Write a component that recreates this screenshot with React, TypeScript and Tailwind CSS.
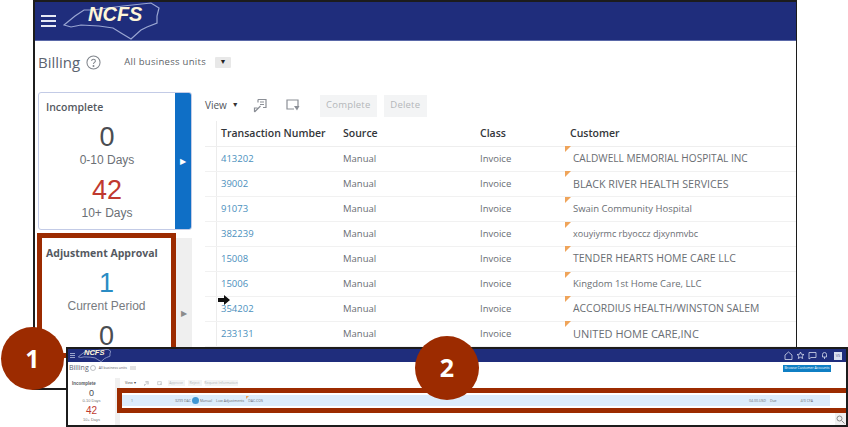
import React from "react";

const sans = "font-['Open_Sans','Liberation_Sans',sans-serif]";
const arial = "font-['Liberation_Sans',sans-serif]";

function Logo({ small }: { small?: boolean }) {
  return (
    <div className={small ? "relative w-[33px] h-[13px]" : "relative w-[97px] h-[38px]"}>
      <svg viewBox="0 0 97 38" className="absolute inset-0 w-full h-full" fill="none">
        <path
          d="M1 23 L12 14 L21 8 L30 8 L60 4 L88 1 L96 6 L94 14 L94 21 L84 25 L78 28 L68 37 L58 31 L50 26 L36 24 L18 23 L8 25 Z"
          stroke="#9aa6d2"
          strokeWidth={small ? 2.4 : 1.2}
        />
      </svg>
      <span
        className={
          small
            ? "absolute left-[6px] top-[-1px] text-[7.5px] leading-[10px] font-bold italic text-[#fff6d8] font-['Liberation_Sans',sans-serif]"
            : "absolute left-[25px] top-0 text-[20px] leading-[25px] font-bold italic text-[#fff6d8] font-['Liberation_Sans',sans-serif]"
        }
      >
        NCFS
      </span>
    </div>
  );
}

function Hamburger({ small }: { small?: boolean }) {
  return (
    <div className={small ? "flex flex-col gap-px w-[5px]" : "flex flex-col gap-[3px] w-[15px]"}>
      {[0, 1, 2].map((i) => (
        <div key={i} className={small ? "h-px bg-[#9aa4cc]" : "h-[2px] bg-[#e6e9f4]"} />
      ))}
    </div>
  );
}

const rows = [
  ["413202", "CALDWELL MEMORIAL HOSPITAL INC", "text-[10.1px]"],
  ["39002", "BLACK RIVER HEALTH SERVICES", "text-[10.7px]"],
  ["91073", "Swain Community Hospital", "text-[9.5px]"],
  ["382239", "xouyiyrmc rbyoccz djxynmvbc", "text-[9px]"],
  ["15008", "TENDER HEARTS HOME CARE LLC", "text-[10.5px]"],
  ["15006", "Kingdom 1st Home Care, LLC", "text-[9.5px]"],
  ["354202", "ACCORDIUS HEALTH/WINSTON SALEM", "text-[10.4px]"],
  ["233131", "UNITED HOME CARE,INC", "text-[11px]"],
];

function DetachIcon({ size = 15 }: { size?: number }) {
  return (
    <svg width={size} height={size} viewBox="0 0 15 15" fill="none" stroke="#8b8f96" strokeWidth="1.2">
      <path d="M5 1.5h8v8h-3M5 1.500v3M7 4h4M7 6.500h4M1.500 14v-4h3M1.500 14l6-6" />
    </svg>
  );
}

function WrapIcon({ size = 15 }: { size?: number }) {
  return (
    <svg width={size} height={size} viewBox="0 0 15 15" fill="none" stroke="#8b8f96" strokeWidth="1.2">
      <path d="M9 11H2V2h11v6" />
      <path d="M9 8h5.500L12 12.500z" fill="#8b8f96" stroke="none" />
    </svg>
  );
}

export default function App() {
  return (
    <div className={`relative w-[848px] h-[427px] overflow-hidden bg-white ${sans}`}>
      {/* Main window */}
      <div className="ml-[33px] w-[764px] h-[390px] border-2 border-[#1c1c1c] border-r-[1px] flex flex-col overflow-hidden bg-white">
        <div className="h-[39px] bg-[#1f2d7c] flex items-center pl-[6px] gap-[7px] shrink-0 border-b border-[#5a68a8]">
          <Hamburger />
          <Logo />
        </div>

        <div className="h-[51px] pb-[9px] flex items-center pl-[3px] shrink-0">
          <span className="text-[15px] text-[#5c6470]">Billing</span>
          <svg width="15" height="15" viewBox="0 0 16 16" className="ml-[6px]" fill="none" stroke="#80858c" strokeWidth="1.1">
            <circle cx="8" cy="8" r="7" />
            <path d="M6 6.400c0-2.400 4-2.400 4 0 0 1.600-2 1.500-2 3.200" />
            <circle cx="8" cy="11.800" r=".5" />
          </svg>
          <span className="ml-[23px] text-[9.5px] text-[#5d6268] tracking-[0.3px]">All business units</span>
          <span className="ml-[9px] w-[16px] h-[11px] bg-[#e8e8e8] rounded-[1px] flex items-center justify-center text-[7px] text-[#222]">▼</span>
        </div>

        <div className="flex flex-1 min-h-0">
          {/* Sidebar */}
          <div className="w-[157px] shrink-0 pl-[3px] flex flex-col gap-[3px]">
            <div className="h-[138px] shrink-0 flex rounded-[3px] border border-[#c3cbe6]">
              <div className={`flex-1 flex flex-col items-center pt-[6px] ${arial}`}>
                <div className={`self-start pl-[7px] text-[10.5px] font-semibold text-[#55595f] leading-[16px] ${sans}`}>Incomplete</div>
                <div className="text-[27px] leading-[30px] mt-[7px] text-[#4a4d52]">0</div>
                <div className="text-[12px] leading-[14px] mt-px text-[#6b6f75]">0-10 Days</div>
                <div className="text-[27px] leading-[30px] mt-[8px] text-[#c0392f]">42</div>
                <div className="text-[12px] leading-[14px] mt-px text-[#6b6f75]">10+ Days</div>
              </div>
              <div className="w-[16px] bg-[#0f6fc6] flex items-center justify-center rounded-r-[2px]">
                <span className="text-white text-[8px]">▶</span>
              </div>
            </div>
            <div className="flex flex-1 min-h-0">
              <div className={`w-[139px] -ml-[1px] h-[125px] border-[5px] border-[#9c2b00] flex flex-col items-center shrink-0 ${arial}`}>
                <div className={`self-start pl-[4px] text-[10.5px] font-bold text-[#55595f] mt-[7px] leading-[16px] whitespace-nowrap ${sans}`}>Adjustment Approval</div>
                <div className="text-[27px] leading-[28px] mt-[8px] text-[#2a8cc4]">1</div>
                <div className="text-[12px] leading-[14px] mt-[2px] text-[#777b80]">Current Period</div>
                <div className="text-[27px] leading-[30px] mt-[8px] text-[#4a4d52]">0</div>
              </div>
              <div className="w-[16px] bg-[#efefef] mt-[5px] flex items-center justify-center">
                <span className="text-[#8b8b8b] text-[8px]">▶</span>
              </div>
            </div>
          </div>

          {/* Content */}
          <div className="flex-1 min-w-0 pl-[13px]">
            <div className="h-[31px] flex items-center mt-[-2px]">
              <span className="text-[10px] text-[#50555b]">View</span>
              <span className="ml-[5px] text-[7px] text-[#333]">▼</span>
              <span className="ml-[14px]"><DetachIcon /></span>
              <span className="ml-[17px]"><WrapIcon /></span>
              <span className="ml-[20px] h-[22px] w-[57px] bg-[#f3f4f5] flex items-center justify-center text-[9.5px] text-[#b4b7ba] tracking-[0.2px]">Complete</span>
              <span className="ml-[7px] h-[22px] w-[43px] bg-[#f3f4f5] flex items-center justify-center text-[9.5px] text-[#b4b7ba] tracking-[0.2px]">Delete</span>
            </div>
            <div className="h-[26px] flex items-center border-b border-[#eeeeee] text-[10.5px] font-semibold text-[#33363a]">
              <span className="w-[12px] self-stretch border-r border-[#ececec] shrink-0" />
              <span className="pl-[4px] w-[126px] shrink-0">Transaction Number</span>
              <span className="w-[137px] shrink-0">Source</span>
              <span className="w-[90px] shrink-0">Class</span>
              <span>Customer</span>
            </div>
            {rows.map(([n, c, size]) => (
              <div key={n} className="h-[25px] flex items-center border-b border-[#f1f1f1] text-[9.5px] text-[#6a6e73]">
                <span className="w-[12px] self-stretch border-r border-[#ececec] shrink-0" />
                <span className="pl-[4px] w-[126px] shrink-0 text-[#4b8fbd]">{n}</span>
                <span className="w-[137px] shrink-0">Manual</span>
                <span className="w-[90px] shrink-0">Invoice</span>
                <span className={`relative whitespace-nowrap pl-[3px] ${size}`}>
                  <span className="absolute left-[-5px] top-[-5px] w-0 h-0 border-t-[6px] border-t-[#efa45a] border-r-[6px] border-r-transparent" />
                  {c}
                </span>
              </div>
            ))}
          </div>
        </div>
      </div>

      {/* Cursor over the table */}
      <svg width="12" height="10" viewBox="0 0 12 10" className="absolute left-[218px] top-[295px]">
        <path d="M0 3h6V0l6 5-6 5V7H0z" fill="#111" />
      </svg>

      {/* Inset window */}
      <div className="absolute left-[66px] top-[347px] w-[782px] h-[80px] border-2 border-[#1c1c1c] bg-white flex flex-col overflow-hidden">
        <div className="h-[13px] bg-[#1f2d7c] flex items-center pl-[2px] gap-[3px] shrink-0 pr-[4px]">
          <Hamburger small />
          <Logo small />
          <div className="ml-auto flex items-center gap-[3px]">
            <svg width="9" height="9" viewBox="0 0 9 9" fill="none" stroke="#d6daec" strokeWidth=".8"><path d="M1 4 4.500 1 8 4v4.500H1z" /></svg>
            <svg width="9" height="9" viewBox="0 0 9 9" fill="none" stroke="#d6daec" strokeWidth=".8"><path d="M4.500 1l1 2.300 2.500.2-1.900 1.600.6 2.400-2.200-1.300-2.200 1.300.6-2.400L1 3.500l2.500-.2z" /></svg>
            <svg width="9" height="9" viewBox="0 0 9 9" fill="none" stroke="#d6daec" strokeWidth=".8"><path d="M1 1.500h7v5H3L1 8z" /></svg>
            <svg width="9" height="9" viewBox="0 0 9 9" fill="none" stroke="#d6daec" strokeWidth=".8"><path d="M2.500 6V3.500a2 2 0 0 1 4 0V6zM4.500 6v2" /></svg>
            <span className="ml-[2px] w-[8px] h-[8px] bg-[#d9dff0] text-[4px] text-[#55608f] flex items-center justify-center">VS</span>
          </div>
        </div>
        <div className="h-[16px] pb-[4px] flex items-center pl-[1px] shrink-0">
          <span className="text-[7px] text-[#5c6470]">Billing</span>
          <svg width="6" height="6" viewBox="0 0 6 6" className="ml-[1px]" fill="none" stroke="#80858c" strokeWidth=".5"><circle cx="3" cy="3" r="2.500" /></svg>
          <span className="ml-[3px] text-[3.5px] text-[#5d6268]">All business units</span>
          <span className="ml-[3px] w-[6px] h-[4px] bg-[#e2e2e2]" />
          <span className="ml-auto mr-[15px] h-[7px] w-[48px] bg-[#0f7fc4] text-white text-[3.5px] flex items-center justify-center whitespace-nowrap">Browse Customer Accounts</span>
        </div>
        <div className="flex flex-1 min-h-0">
          <div className={`w-[52px] shrink-0 border-r-[5px] border-[#f0f0f0] flex flex-col items-center ${arial}`}>
            <div className="self-start pl-[4px] text-[4.5px] font-semibold text-[#55595f] leading-[6px] mt-[3px]">Incomplete</div>
            <div className="text-[9px] leading-[9px] mt-[2px] text-[#4a4d52]">0</div>
            <div className="text-[4px] leading-[5px] text-[#777]">0-10 Days</div>
            <div className="text-[10px] leading-[10px] mt-[3px] text-[#c0392f]">42</div>
            <div className="text-[4px] leading-[5px] mt-px text-[#777]">10+ Days</div>
          </div>
          <div className="flex-1 min-w-0 relative">
            <div className="h-[10px] pl-[5px] flex items-center text-[3.5px] text-[#666]">
              <span className="text-[#444]">View ▾</span>
              <span className="ml-[8px]"><DetachIcon size={5} /></span>
              <span className="ml-[8px]"><WrapIcon size={5} /></span>
              <span className="ml-[6px] h-[6px] w-[17px] bg-[#f3f4f5] text-[#b4b7ba] flex items-center justify-center">Approve</span>
              <span className="ml-[3px] h-[6px] w-[14px] bg-[#f3f4f5] text-[#b4b7ba] flex items-center justify-center">Reject</span>
              <span className="ml-[3px] h-[6px] w-[33px] bg-[#f3f4f5] text-[#b4b7ba] flex items-center justify-center whitespace-nowrap">Request Information</span>
            </div>
            {/* Scrollbar corner behind the search icon */}
            <div className="absolute right-0 top-[20px] bottom-0 w-[11px] bg-[#f0f0f0]" />
            {/* Highlighted row */}
            <div className="absolute left-[-3px] right-0 top-[10px] h-[25px] border-[5px] border-r-0 border-[#9c2b00] bg-white pt-[2px]">
              <div className="h-[11px] bg-[#dcecfb] mr-[16px] flex items-center text-[3.5px] text-[#6a6e73] relative">
                <span className="ml-[9px]">1</span>
                <span className="ml-[42px]">3299 DAC</span>
                <span className="w-[7px] h-[7px] rounded-full bg-[#3f97d4] ml-px" />
                <span className="ml-px">Manual</span>
                <span className="ml-[4px]">Low Adjustments</span>
                <span className="ml-[4px] relative">
                  <span className="absolute left-[-2px] top-[-2px] w-0 h-0 border-t-[3px] border-t-[#efa45a] border-r-[3px] border-r-transparent" />
                  DAC.COS
                </span>
                <span className="ml-auto mr-[4px]">04.00.USD</span>
                <span className="mr-[24px]">Due</span>
                <span className="mr-[17px]">4/3 CFA</span>
              </div>
            </div>
            <svg width="9" height="9" viewBox="0 0 9 9" className="absolute right-[1px] bottom-[1px]" fill="none" stroke="#888" strokeWidth="1">
              <circle cx="3.500" cy="3.500" r="2.500" />
              <path d="M5.500 5.500 8.500 8.500" />
            </svg>
          </div>
        </div>
      </div>

      {/* Callout numbers */}
      <div className="absolute left-[1px] top-[327px] w-[63px] h-[63px] rounded-full bg-[#9c2b00] flex items-center justify-center text-white text-[25px] font-bold">1</div>
      <div className="absolute left-[415px] top-[336px] w-[64px] h-[64px] rounded-full bg-[#9c2b00] flex items-center justify-center text-white text-[25px] font-bold">2</div>
    </div>
  );
}
